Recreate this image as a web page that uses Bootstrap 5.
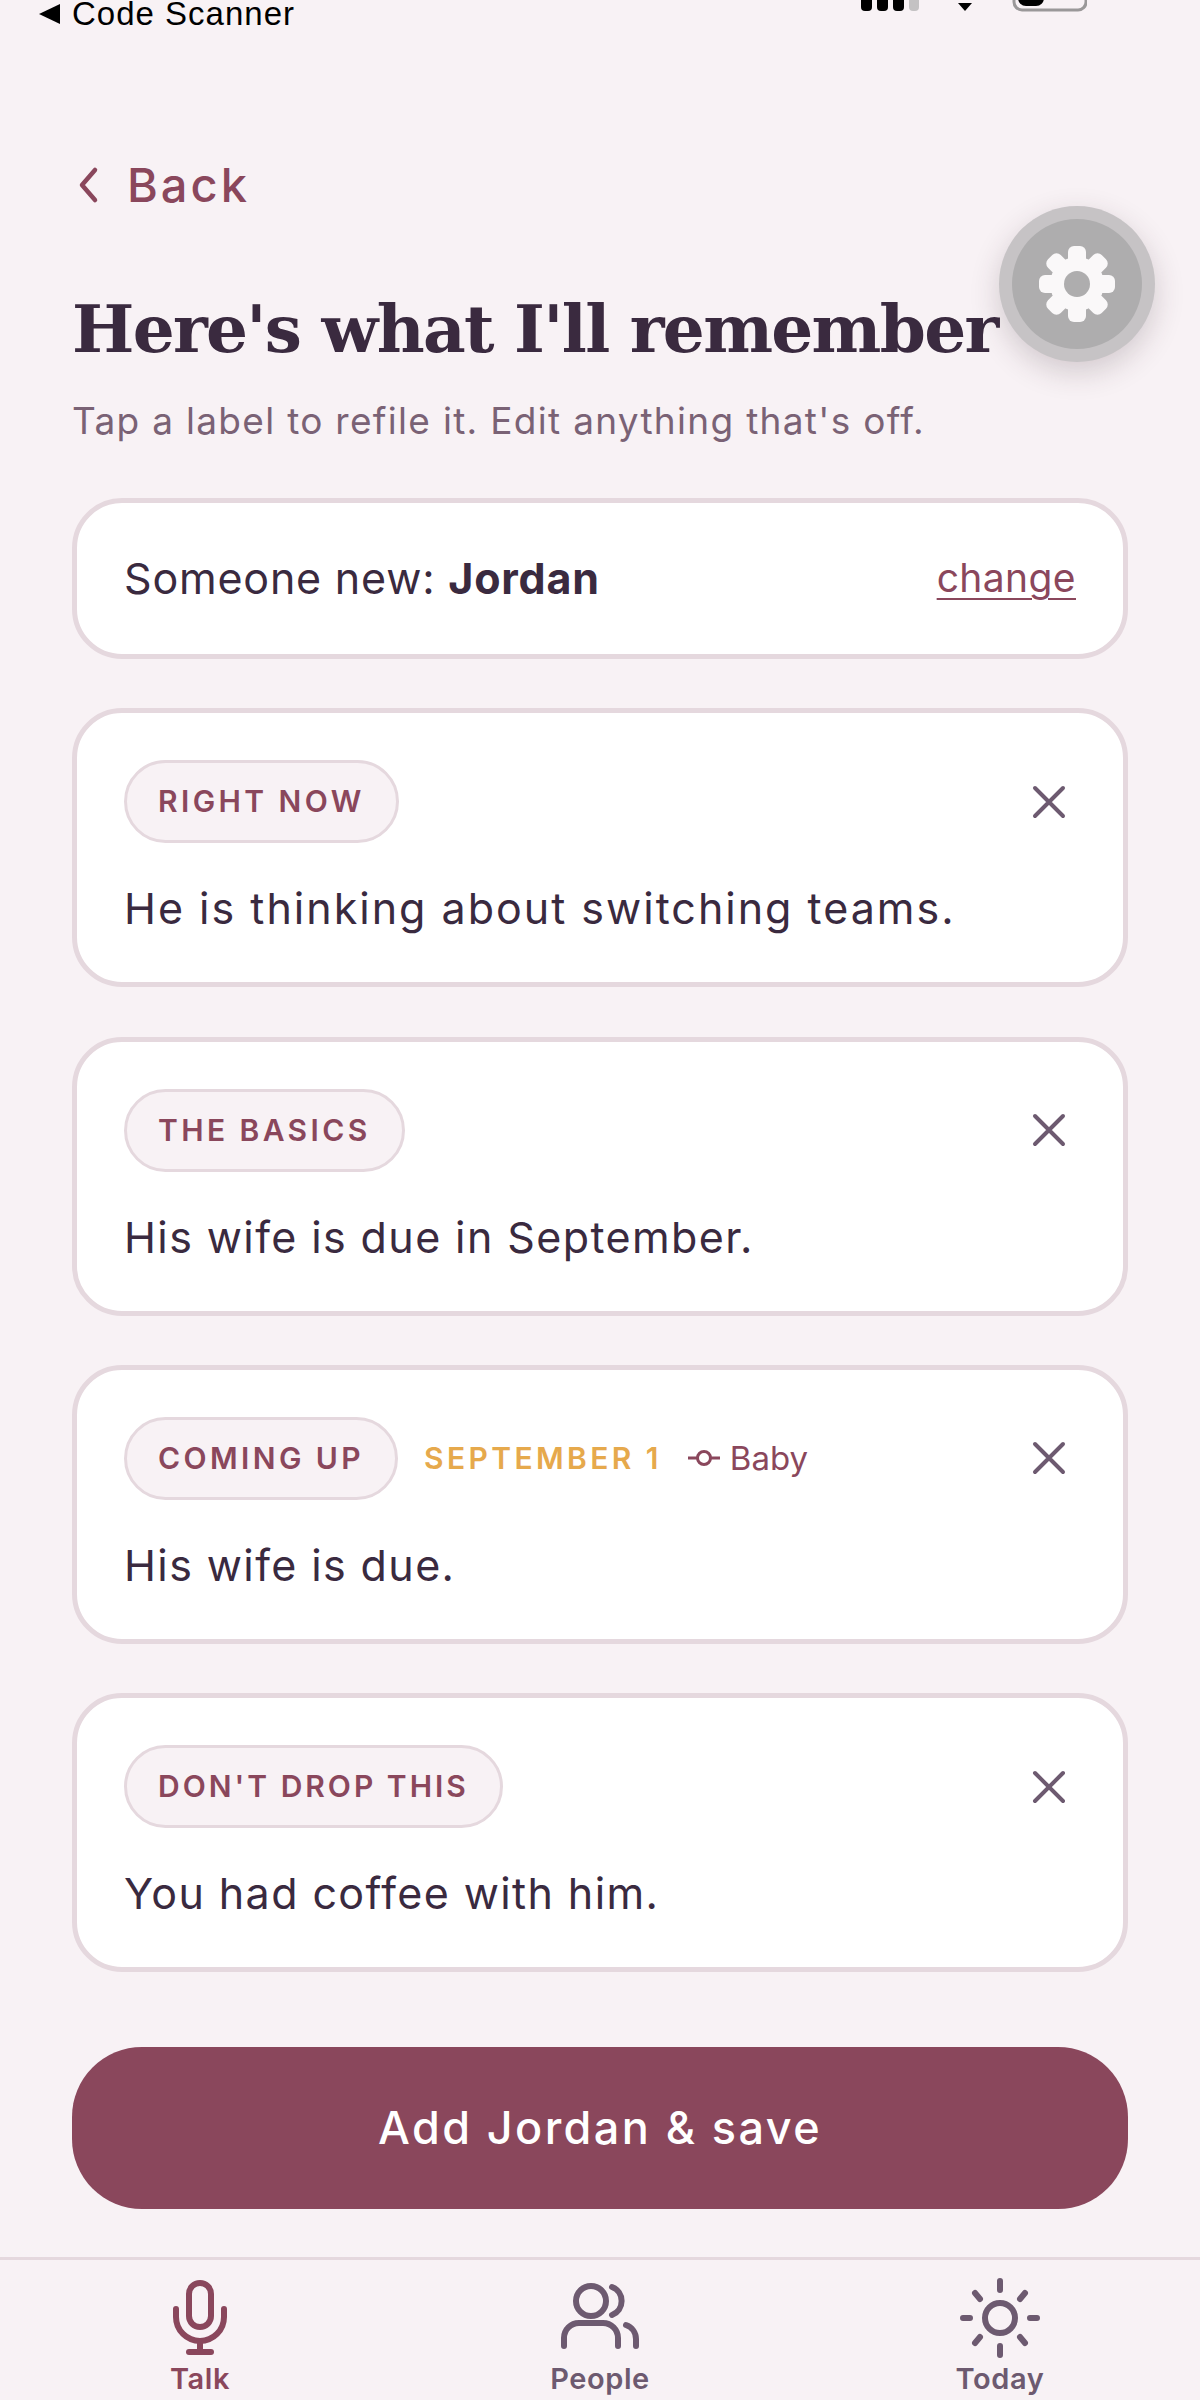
<!DOCTYPE html>
<html lang="en">
<head>
    <meta charset="UTF-8">
    <meta name="viewport" content="width=device-width, initial-scale=1.0">
    <link href="https://cdn.jsdelivr.net/npm/bootstrap@5.3.3/dist/css/bootstrap.min.css" rel="stylesheet">
    <title>Here's what I'll remember</title>
    <style>
        html, body { height: 2400px; overflow: hidden; }
        body { background: #f8f2f5; color: #3a2a3f; font-family: "Inter", "Open Sans", sans-serif; }

        .app-shell { height: 2400px; }

        .status-bar { height: 36px; padding: 0 113px 0 38px; }
        .status-left { font-family: "Liberation Sans", sans-serif; font-size: 33px; line-height: 26px; padding-top: 1px; color: #000; letter-spacing: 1px; }
        .status-left svg { margin-right: 12px; }

        .page-body { padding: 0 72px; }
        .back-link { margin-top: 119px; height: 60px; padding-left: 3px; font-size: 47px; font-weight: 500; letter-spacing: 3px; color: #8a475c; text-decoration: none; gap: 24px; }
        .page-title { margin: 69px 0 0; font-family: "DejaVu Serif", serif; font-weight: 700; font-size: 66px; line-height: 90px; letter-spacing: -1.7px; color: #3a2a3f; white-space: nowrap; }
        .page-sub { margin: 22px 0 0; font-size: 37px; line-height: 50px; color: #7a6275; letter-spacing: 1.3px; }

        .settings-fab { position: absolute; left: 999px; top: 206px; width: 156px; height: 156px; border-radius: 50%; background: #c6c3c5; box-shadow: 0 10px 30px rgba(60, 40, 50, .2); }
        .settings-fab span { width: 130px; height: 130px; border-radius: 50%; background: #aeadae; }

        .stack-list { margin-top: 52px; gap: 49.3px; }
        .memo-card { border: 5px solid #e5d8de; border-radius: 50px; background: #fff; }
        .person-row { height: 161px; padding: 0 47px; font-size: 43px; letter-spacing: .8px; }
        .person-row a { font-size: 39px; letter-spacing: .4px; color: #8a475c; text-underline-offset: 6px; text-decoration-thickness: 2px; }
        .person-row strong { font-weight: 700; }

        .fact-body { padding: 47px 47px 42px 47px; }
        .fact-head { height: 83px; }
        .fact-pill { height: 83px; padding: 0 31px; border: 3px solid #e5d8de; border-radius: 42px; background: #f8f2f5; color: #8a475c; font-size: 30px; font-weight: 600; letter-spacing: 3.4px; white-space: nowrap; }
        .fact-pill.pill-tight { letter-spacing: 3px; }
        .fact-date { margin-left: 26px; color: #e6a94c; font-size: 30px; font-weight: 600; letter-spacing: 3.4px; }
        .fact-link { margin-left: 26px; gap: 10px; color: #8a475c; font-size: 33px; }
        .fact-text { margin: 33px 0 0; font-size: 43px; line-height: 64px; letter-spacing: 1.4px; color: #3a2a3f; }
        .fact-text.text-wide { letter-spacing: 2px; }
        .fact-close { margin-right: 10px; }

        .save-btn { margin-top: 75px; height: 162px; border-radius: 70px; background: #8a475c; border: 0; color: #fff; font-size: 45px; font-weight: 500; letter-spacing: 2.4px; }

        .tab-bar { margin-top: 48px; border-top: 3px solid #e5d8de; padding-top: 18px; }
        .tab-item { width: 400px; color: #6d5a70; font-size: 29px; font-weight: 600; letter-spacing: .6px; line-height: 36px; text-decoration: none; }
        .tab-item svg { height: 80px; display: block; margin-bottom: 3px; }
        .tab-item.active { color: #8a475c; }
    </style>
</head>
<body>
<div class="app-shell position-relative overflow-hidden">

    <!-- status bar, cut off by the top of the shot -->
    <div class="status-bar d-flex justify-content-between align-items-start overflow-hidden">
        <div class="status-left d-flex align-items-center">
            <svg width="22" height="22" viewBox="0 0 22 22"><path d="M22 1v20L1 11z" fill="#000"/></svg>
            Code Scanner
        </div>
        <svg width="226" height="14" viewBox="0 0 226 14">
            <rect x="0" y="-10" width="11" height="21" rx="4" fill="#000"/>
            <rect x="16" y="-10" width="11" height="21" rx="4" fill="#000"/>
            <rect x="32" y="-10" width="11" height="21" rx="4" fill="#000"/>
            <rect x="48" y="-10" width="10" height="21" rx="4" fill="#c4c2c3"/>
            <path d="M97 3h14l-7 8z" fill="#000"/>
            <rect x="153" y="-14" width="72" height="24" rx="8" fill="none" stroke="#9a9899" stroke-width="3"/>
            <rect x="157" y="-14" width="26" height="20" rx="8" fill="#000"/>
        </svg>
    </div>

    <main class="page-body">
        <a href="#" class="back-link d-flex align-items-center">
            <svg width="28" height="40" viewBox="0 0 28 40"><path d="M20 5 7 20l13 15" fill="none" stroke="#8a475c" stroke-width="4.5" stroke-linecap="round" stroke-linejoin="round"/></svg>
            Back
        </a>

        <h1 class="page-title">Here's what I'll remember</h1>
        <p class="page-sub">Tap a label to refile it. Edit anything that's off.</p>

        <div class="stack-list d-flex flex-column">
            <div class="memo-card person-row d-flex justify-content-between align-items-center">
                <div>Someone new: <strong>Jordan</strong></div>
                <a href="#">change</a>
            </div>

            <div class="memo-card">
                <div class="fact-body">
                    <div class="fact-head d-flex align-items-center">
                        <span class="fact-pill d-inline-flex align-items-center">RIGHT NOW</span>
                        <svg class="fact-close ms-auto" width="34" height="34" viewBox="0 0 34 34"><path d="M3 3l28 28M31 3 3 31" stroke="#6d5a70" stroke-width="4" stroke-linecap="round"/></svg>
                    </div>
                    <p class="fact-text text-wide">He is thinking about switching teams.</p>
                </div>
            </div>

            <div class="memo-card">
                <div class="fact-body">
                    <div class="fact-head d-flex align-items-center">
                        <span class="fact-pill d-inline-flex align-items-center">THE BASICS</span>
                        <svg class="fact-close ms-auto" width="34" height="34" viewBox="0 0 34 34"><path d="M3 3l28 28M31 3 3 31" stroke="#6d5a70" stroke-width="4" stroke-linecap="round"/></svg>
                    </div>
                    <p class="fact-text">His wife is due in September.</p>
                </div>
            </div>

            <div class="memo-card">
                <div class="fact-body">
                    <div class="fact-head d-flex align-items-center">
                        <span class="fact-pill d-inline-flex align-items-center">COMING UP</span>
                        <span class="fact-date">SEPTEMBER 1</span>
                        <span class="fact-link d-inline-flex align-items-center">
                            <svg width="32" height="18" viewBox="0 0 32 18"><path d="M0 9h9M23 9h9" stroke="#8a475c" stroke-width="3"/><circle cx="16" cy="9" r="6.5" fill="none" stroke="#8a475c" stroke-width="3"/></svg>
                            Baby
                        </span>
                        <svg class="fact-close ms-auto" width="34" height="34" viewBox="0 0 34 34"><path d="M3 3l28 28M31 3 3 31" stroke="#6d5a70" stroke-width="4" stroke-linecap="round"/></svg>
                    </div>
                    <p class="fact-text">His wife is due.</p>
                </div>
            </div>

            <div class="memo-card">
                <div class="fact-body">
                    <div class="fact-head d-flex align-items-center">
                        <span class="fact-pill pill-tight d-inline-flex align-items-center">DON'T DROP THIS</span>
                        <svg class="fact-close ms-auto" width="34" height="34" viewBox="0 0 34 34"><path d="M3 3l28 28M31 3 3 31" stroke="#6d5a70" stroke-width="4" stroke-linecap="round"/></svg>
                    </div>
                    <p class="fact-text">You had coffee with him.</p>
                </div>
            </div>
        </div>

        <button type="button" class="btn save-btn w-100">Add Jordan &amp; save</button>
    </main>

    <nav class="tab-bar d-flex">
        <a href="#" class="tab-item active d-flex flex-column align-items-center">
            <svg width="56" viewBox="0 0 56 80" fill="none" stroke="#8a475c" stroke-width="6" stroke-linecap="round">
                <rect x="17" y="5" width="22" height="44" rx="11"/>
                <path d="M4 31v8a24 24 0 0 0 48 0v-8M28 63v10"/>
                <path d="M17 74h22" stroke-width="6"/>
            </svg>
            Talk
        </a>
        <a href="#" class="tab-item d-flex flex-column align-items-center">
            <svg width="80" viewBox="0 0 80 80" fill="none" stroke="#6d5a70" stroke-width="6" stroke-linecap="round">
                <circle cx="31" cy="23" r="15"/>
                <path d="M52 9a15 15 0 0 1 0 28"/>
                <path d="M4 68v-8a15 15 0 0 1 15-15h24a15 15 0 0 1 15 15v8"/>
                <path d="M66 47a15 15 0 0 1 10 14v7"/>
            </svg>
            People
        </a>
        <a href="#" class="tab-item d-flex flex-column align-items-center">
            <svg width="80" viewBox="0 0 80 80" fill="none" stroke="#6d5a70" stroke-width="6" stroke-linecap="round">
                <circle cx="40" cy="40" r="15"/>
                <path d="M40 3v9M40 68v9M3 40h7M70 40h7M15 15l5 6M60 59l5 6M65 15l-5 6M20 59l-5 6"/>
            </svg>
            Today
        </a>
    </nav>

    <!-- floating settings button sits over the header -->
    <button type="button" class="settings-fab btn p-0 d-flex align-items-center justify-content-center">
        <span class="d-flex align-items-center justify-content-center">
            <svg width="78" height="78" viewBox="0 0 78 78">
                <g fill="#faf8f9">
                    <circle cx="39" cy="39" r="27"/>
                    <rect x="30" y="1" width="18" height="76" rx="6"/>
                    <rect x="30" y="1" width="18" height="76" rx="6" transform="rotate(45 39 39)"/>
                    <rect x="30" y="1" width="18" height="76" rx="6" transform="rotate(90 39 39)"/>
                    <rect x="30" y="1" width="18" height="76" rx="6" transform="rotate(135 39 39)"/>
                </g>
                <circle cx="39" cy="39" r="13" fill="#aeadae"/>
            </svg>
        </span>
    </button>
</div>

<script src="https://cdn.jsdelivr.net/npm/bootstrap@5.3.3/dist/js/bootstrap.bundle.min.js"></script>
</body>
</html>
